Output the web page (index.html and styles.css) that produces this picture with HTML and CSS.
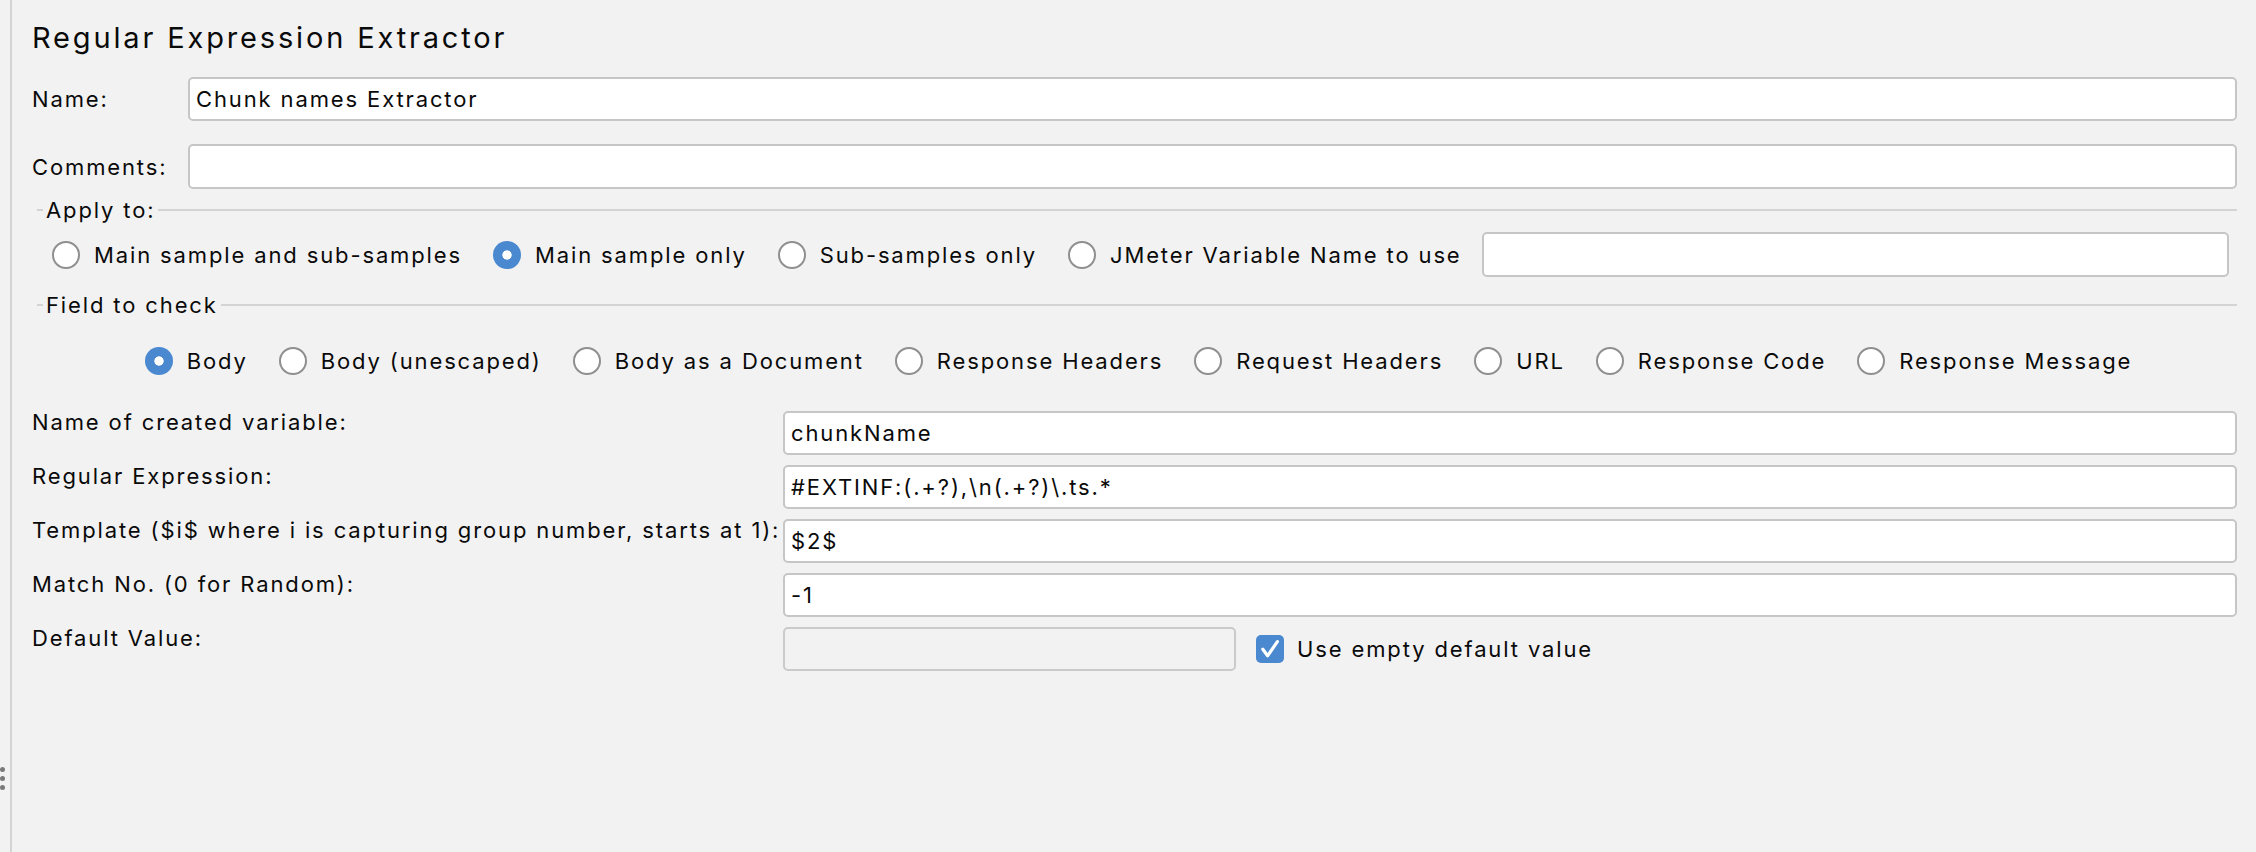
FILE: index.html
```html
<!DOCTYPE html>
<html>
<head>
<meta charset="utf-8">
<title>Regular Expression Extractor</title>
<link rel="stylesheet" href="styles.css">
</head>
<body>
<div class="app">
  <div class="handle"><span class="dot"></span><span class="dot"></span><span class="dot"></span></div>
  <div class="panel">
    <h1 class="title">Regular Expression Extractor</h1>

    <div class="row name-row">
      <span class="lbl">Name:</span>
      <div class="field">Chunk names Extractor</div>
    </div>
    <div class="row comments-row">
      <span class="lbl">Comments:</span>
      <div class="field"></div>
    </div>

    <div class="legend legend-apply"><span class="dash"></span><span class="legend-text">Apply to:</span><span class="rule"></span></div>
    <div class="apply">
      <span class="radio"><span class="circle"></span>Main sample and sub-samples</span>
      <span class="radio"><span class="circle on"></span>Main sample only</span>
      <span class="radio"><span class="circle"></span>Sub-samples only</span>
      <span class="radio last"><span class="circle"></span>JMeter Variable Name to use</span>
      <div class="field var-field"></div>
    </div>

    <div class="legend legend-field"><span class="dash"></span><span class="legend-text">Field to check</span><span class="rule"></span></div>
    <div class="check-fields">
      <span class="radio"><span class="circle on"></span>Body</span>
      <span class="radio"><span class="circle"></span>Body (unescaped)</span>
      <span class="radio"><span class="circle"></span>Body as a Document</span>
      <span class="radio"><span class="circle"></span>Response Headers</span>
      <span class="radio"><span class="circle"></span>Request Headers</span>
      <span class="radio"><span class="circle"></span>URL</span>
      <span class="radio"><span class="circle"></span>Response Code</span>
      <span class="radio"><span class="circle"></span>Response Message</span>
    </div>

    <div class="grid">
      <span class="glbl">Name of created variable:</span>
      <div class="field">chunkName</div>
      <span class="glbl">Regular Expression:</span>
      <div class="field">#EXTINF:(.+?),\n(.+?)\.ts.*</div>
      <span class="glbl">Template ($i$ where i is capturing group number, starts at 1):</span>
      <div class="field">$2$</div>
      <span class="glbl">Match No. (0 for Random):</span>
      <div class="field">-1</div>
      <span class="glbl">Default Value:</span>
      <div class="default-row">
        <div class="field disabled"></div>
        <span class="checkbox"><svg viewBox="0 0 28 28" width="28" height="28"><path d="M6.8 14.2 L11.6 20.8 L21.4 6.6" fill="none" stroke="#fff" stroke-width="3.2" stroke-linecap="round" stroke-linejoin="round"/></svg></span>
        <span class="check-label">Use empty default value</span>
      </div>
    </div>
  </div>
</div>
</body>
</html>
```

FILE: styles.css
```css
html, body {
  margin: 0;
  padding: 0;
}
body {
  background: #f2f2f2;
  font-family: Inter, "Liberation Sans", sans-serif;
  font-size: 22px;
  letter-spacing: 0.085em;
  color: #0a0a0a;
}
.app {
  display: flex;
  height: 852px;
  overflow: hidden;
}
.handle {
  width: 10px;
  flex: none;
  display: flex;
  flex-direction: column;
  gap: 4px;
  padding-top: 767px;
  box-sizing: border-box;
}
.dot {
  width: 5px;
  height: 5px;
  border-radius: 50%;
  background: #7a7a7a;
}
.panel {
  flex: 1;
  border-left: 2px solid #d4d4d4;
  padding: 20px 19px 0 20px;
  display: flex;
  flex-direction: column;
  min-width: 0;
}
.title {
  margin: 0;
  font-size: 29px;
  font-weight: 400;
  letter-spacing: 0.098em;
  line-height: 36px;
  height: 36px;
  white-space: nowrap;
}
.row {
  display: flex;
  align-items: center;
}
.name-row {
  margin-top: 21px;
  height: 44px;
}
.comments-row {
  margin-top: 23px;
  height: 45px;
}
.lbl {
  width: 156px;
  flex: none;
  white-space: nowrap;
}
.field {
  flex: 1;
  height: 100%;
  box-sizing: border-box;
  background: #fff;
  border: 2px solid #c6c6c6;
  border-radius: 5px;
  padding: 0 6px;
  display: flex;
  align-items: center;
  white-space: nowrap;
  min-width: 0;
}
.legend {
  display: flex;
  align-items: center;
  height: 26px;
}
.legend-apply {
  margin-top: 8px;
}
.legend-field {
  margin-top: 15px;
}
.dash {
  width: 6px;
  height: 2px;
  background: #d3d3d3;
  margin-left: 5px;
  margin-right: 3px;
  flex: none;
}
.legend-text {
  line-height: 26px;
  margin-right: 3px;
  white-space: nowrap;
}
.rule {
  flex: 1;
  height: 2px;
  background: #d3d3d3;
}
.apply {
  margin-top: 9px;
  height: 45px;
  padding-left: 20px;
  padding-right: 8px;
  display: flex;
  align-items: center;
}
.apply .radio {
  margin-right: 31px;
}
.apply .radio.last {
  margin-right: 20px;
}
.radio {
  display: flex;
  align-items: center;
  white-space: nowrap;
  flex: none;
}
.circle {
  width: 28px;
  height: 28px;
  box-sizing: border-box;
  border-radius: 50%;
  border: 2px solid #8f8f8f;
  background: #fff;
  margin-right: 14px;
  flex: none;
}
.circle.on {
  border: none;
  background: radial-gradient(circle, #fff 0 4.3px, #4a88d0 5px);
}
.check-fields {
  margin-top: 28px;
  height: 30px;
  display: flex;
  justify-content: center;
  align-items: center;
  gap: 31px;
  padding-left: 8px;
}
.grid {
  margin-top: 35px;
  display: grid;
  grid-template-columns: 751px 1fr;
  grid-auto-rows: 44px;
  row-gap: 10px;
}
.glbl {
  line-height: 22px;
  align-self: start;
  white-space: nowrap;
}
.default-row {
  display: flex;
  align-items: center;
}
.field.disabled {
  flex: none;
  width: 453px;
  background: #f2f2f2;
  border-color: #cacaca;
}
.checkbox {
  width: 28px;
  height: 28px;
  border-radius: 5px;
  background: #4a88d0;
  margin-left: 20px;
  margin-right: 13px;
  flex: none;
  display: flex;
}
.check-label {
  white-space: nowrap;
}
```
